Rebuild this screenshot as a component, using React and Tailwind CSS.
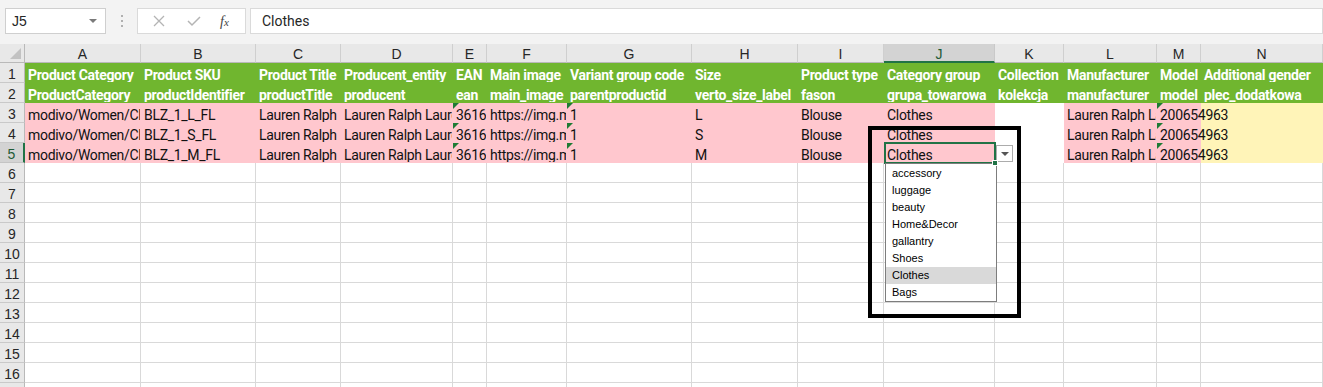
import React from "react";

const cols = ["A", "B", "C", "D", "E", "F", "G", "H", "I", "J", "K", "L", "M", "N"];

const header1 = ["Product Category", "Product SKU", "Product Title", "Producent_entity", "EAN", "Main image", "Variant group code", "Size", "Product type", "Category group", "Collection", "Manufacturer", "Model", "Additional gender"];
const header2 = ["ProductCategory", "productIdentifier", "productTitle", "producent", "ean", "main_image", "parentproductid", "verto_size_label", "fason", "grupa_towarowa", "kolekcja", "manufacturer", "model", "plec_dodatkowa"];

const products = [
  { sku: "BLZ_1_L_FL", size: "L" },
  { sku: "BLZ_1_S_FL", size: "S" },
  { sku: "BLZ_1_M_FL", size: "M" },
];

const options = ["accessory", "luggage", "beauty", "Home&Decor", "gallantry", "Shoes", "Clothes", "Bags"];

// which columns have the little green "number stored as text" flag
const flagged = [4, 6, 12];

function fillFor(ci) {
  if (ci === 10) return "white";
  if (ci === 13) return "yellow";
  return "pink";
}

function Cell({ children, fill, flag, overflow }) {
  const bg =
    fill === "green"
      ? "bg-[#70b62f] border-[#70b62f] text-white font-bold"
      : fill === "pink"
      ? "bg-[#ffc7ce] border-[#ffc7ce] text-[#111]"
      : fill === "yellow"
      ? "bg-[#fff4b8] border-[#fff4b8] text-[#111]"
      : fill === "white"
      ? "bg-white border-white"
      : "bg-white border-[#d9d9d9]";
  return (
    <div
      className={`relative h-[20px] border-r border-b pl-[3px] pt-[4px] flex items-center whitespace-nowrap text-[14px] leading-[16px] tracking-[-0.3px] ${bg} ${
        overflow ? "overflow-visible" : "overflow-hidden"
      }`}
    >
      {flag && (
        <span className="absolute left-0 top-0 w-0 h-0 border-t-[6px] border-r-[6px] border-t-[#1e7b34] border-r-transparent" />
      )}
      <span className="relative z-10">{children}</span>
    </div>
  );
}

function RowHead({ n, active }) {
  return (
    <div
      className={`h-[20px] pt-[3px] flex items-center justify-center text-[14px] leading-[16px] font-['Liberation_Sans',sans-serif] border-b ${
        active
          ? "bg-[#d3d3d3] border-b-[#c4c4c4] border-r-2 border-r-[#217346] text-[#1e5b36]"
          : "bg-[#e8e8e8] border-b-[#c9c9c9] border-r border-r-[#b9b9b9] text-[#262626]"
      }`}
    >
      {n}
    </div>
  );
}

export default function App() {
  const rows = [];
  for (let r = 6; r <= 17; r++) rows.push(r);

  return (
    <div className="relative w-[1323px] h-[387px] overflow-hidden bg-white font-['Roboto',sans-serif] text-[#111]">
      {/* formula bar */}
      <div className="h-[44px] bg-[#f3f3f3] flex items-start pt-[8px] pl-[5px]">
        <div className="w-[101px] h-[26px] bg-white border border-[#cfcfcf] flex items-center justify-between pl-[6px] pr-[8px]">
          <span className="text-[14px] text-[#262626] font-['Liberation_Sans',sans-serif]">J5</span>
          <span className="w-0 h-0 border-l-[4px] border-r-[4px] border-t-[4px] border-l-transparent border-r-transparent border-t-[#7a7a7a]" />
        </div>
        <div className="w-[31px] h-[26px] flex flex-col items-center justify-center gap-[3px]">
          <span className="w-[2px] h-[2px] bg-[#b0b0b0]" />
          <span className="w-[2px] h-[2px] bg-[#b0b0b0]" />
          <span className="w-[2px] h-[2px] bg-[#b0b0b0]" />
        </div>
        <div className="w-[109px] h-[26px] bg-white border border-[#dadada] flex items-center">
          <svg width="14" height="14" viewBox="0 0 14 14" className="ml-[14px]">
            <path d="M2 2 L12 12 M12 2 L2 12" stroke="#b4b4b4" strokeWidth="1.3" fill="none" />
          </svg>
          <svg width="16" height="14" viewBox="0 0 16 14" className="ml-[20px]">
            <path d="M2 7 L6 11 L14 3" stroke="#b4b4b4" strokeWidth="1.5" fill="none" />
          </svg>
          <span className="ml-[18px] text-[14px] italic font-['Liberation_Serif',serif] text-[#444]">
            f<span className="text-[11px]">x</span>
          </span>
        </div>
        <div className="ml-[4px] flex-1 h-[26px] bg-white border border-[#dadada] flex items-center pl-[11px]">
          <span className="text-[14px] text-[#262626]">Clothes</span>
        </div>
      </div>

      {/* sheet */}
      <div className="grid grid-cols-[25px_116px_115px_85px_112px_34px_80px_125px_106px_86px_111px_69px_93px_44px_122px]">
        <div className="h-[19px] bg-[#e8e8e8] border-r border-b border-[#b9b9b9] relative">
          <span
            className="absolute right-[3px] bottom-[3px] w-0 h-0"
            style={{ borderBottom: "11px solid #c2c2c2", borderLeft: "11px solid transparent" }}
          />
        </div>
        {cols.map((c) => (
          <div
            key={c}
            className={`h-[19px] pt-[2px] flex items-center justify-center text-[14px] leading-[16px] font-['Liberation_Sans',sans-serif] border-r ${
              c === "J"
                ? "bg-[#d3d3d3] border-r-[#c9c9c9] border-b-2 border-b-[#217346] text-[#1e5b36]"
                : "bg-[#e8e8e8] border-r-[#cfcfcf] border-b border-b-[#b9b9b9] text-[#262626]"
            }`}
          >
            {c}
          </div>
        ))}

        <RowHead n={1} />
        {header1.map((t, i) => (
          <Cell key={"h1" + i} fill="green">{t}</Cell>
        ))}
        <RowHead n={2} />
        {header2.map((t, i) => (
          <Cell key={"h2" + i} fill="green">{t}</Cell>
        ))}

        {products.map((p, pi) => {
          const values = [
            "modivo/Women/Clothes/Blouses",
            p.sku,
            "Lauren Ralph Lauren",
            "Lauren Ralph Lauren",
            "3616535123456",
            "https://img.modivo.cloud/",
            "1",
            p.size,
            "Blouse",
            "Clothes",
            "",
            "Lauren Ralph Lauren",
            "200654963",
            "",
          ];
          return (
            <React.Fragment key={p.sku}>
              <RowHead n={pi + 3} active={pi === 2} />
              {values.map((v, ci) => (
                <Cell key={ci} fill={fillFor(ci)} flag={flagged.includes(ci)} overflow={ci === 12}>
                  {v}
                </Cell>
              ))}
            </React.Fragment>
          );
        })}

        {rows.map((r) => (
          <React.Fragment key={r}>
            <RowHead n={r} />
            {cols.map((c) => (
              <Cell key={c} />
            ))}
          </React.Fragment>
        ))}
      </div>

      {/* active cell J5 */}
      <div className="absolute left-[884px] top-[142px] w-[112px] h-[22px] border-2 border-[#217346] z-20" />
      <div className="absolute left-[992px] top-[160px] w-[6px] h-[6px] bg-[#217346] border border-white z-30" />

      {/* validation dropdown button */}
      <div className="absolute left-[996px] top-[145px] w-[17px] h-[17px] bg-white border border-[#acacac] flex items-center justify-center z-20">
        <span className="w-0 h-0 border-l-[4px] border-r-[4px] border-t-[4px] border-l-transparent border-r-transparent border-t-[#555]" />
      </div>

      {/* validation list */}
      <div className="absolute left-[885px] top-[163px] w-[112px] h-[139px] bg-white border border-[#7d7d7d] pt-[1px] z-20 font-['Liberation_Sans',sans-serif]">
        {options.map((o) => (
          <div
            key={o}
            className={`h-[17px] flex items-center pl-[6px] text-[11px] text-black ${
              o === "Clothes" ? "bg-[#d9d9d9]" : ""
            }`}
          >
            {o}
          </div>
        ))}
      </div>

      {/* annotation box */}
      <div className="absolute left-[868px] top-[126px] w-[153px] h-[192px] border-[4px] border-black z-10" />
    </div>
  );
}
